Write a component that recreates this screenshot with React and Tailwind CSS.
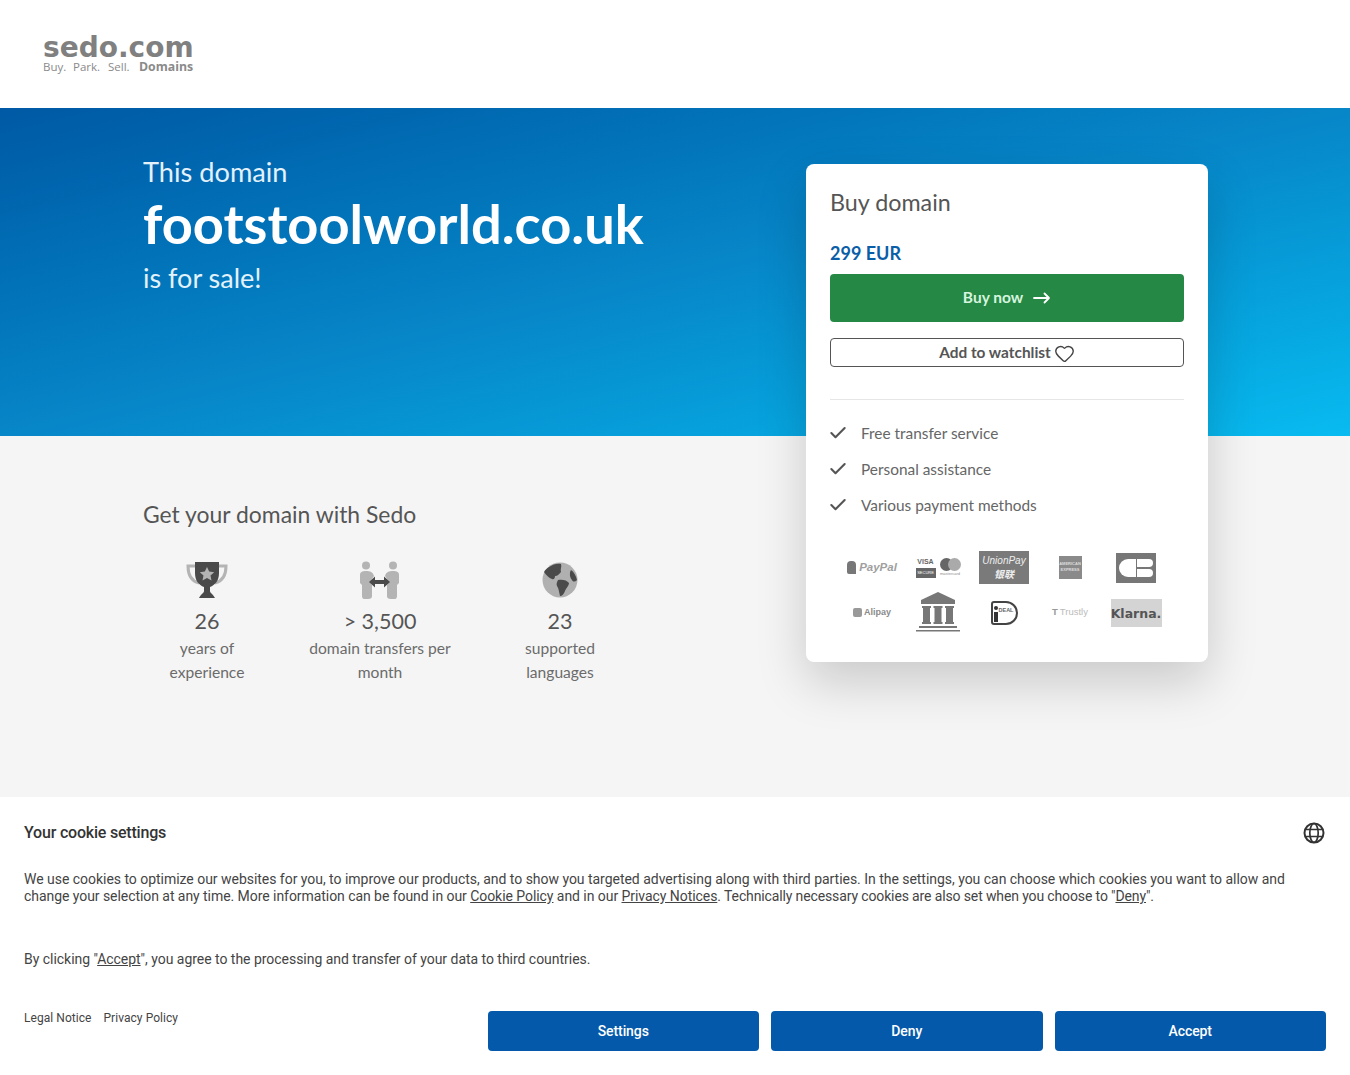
import React from 'react';
import { Heart, Check } from 'lucide-react';

const body = { fontFamily: 'Lato, "Noto Sans", sans-serif' };
const arial = { fontFamily: '"Liberation Sans", sans-serif' };
const dejavu = { fontFamily: '"DejaVu Sans", sans-serif' };

function Trophy() {
  return (
    <svg width="42" height="36" viewBox="0 0 42 36" className="block">
      <path d="M10 4H2c0 9 3 15 11 17M32 4h8c0 9-3 15-11 17" fill="none" stroke="#b4b4b4" strokeWidth="3" />
      <path d="M9 0h24v11c0 8-4 12-9 14v4c0 2 3 3 5 7H13c2-4 5-5 5-7v-4C13 23 9 19 9 11z" fill="#4a4a4a" />
      <path d="M21 5l2.200 4.600 5 .6-3.700 3.400 1 5-4.500-2.500-4.500 2.500 1-5-3.700-3.400 5-.6z" fill="#b4b4b4" />
    </svg>
  );
}

function People() {
  return (
    <svg width="42" height="38" viewBox="0 0 42 38" className="block">
      <circle cx="7" cy="4.500" r="4" fill="#b4b4b4" />
      <circle cx="34" cy="4.500" r="4" fill="#b4b4b4" />
      <path d="M1 14c0-3 2-4 6-4s7 1 8 5l-4 6 2 3v11c0 2-1 3-4 3H5c-1 0-2-1-2-3V24l-2-2z" fill="#b4b4b4" />
      <path d="M40 14c0-3-2-4-6-4s-7 1-8 5l4 6-2 3v11c0 2 1 3 4 3h4c1 0 2-1 2-3V24l2-2z" fill="#b4b4b4" />
      <path d="M10 21l6-5.500V19h9v-3.500l6 5.500-6 5.500V23h-9v3.500z" fill="#4a4a4a" />
    </svg>
  );
}

function Earth() {
  return (
    <svg width="36" height="36" viewBox="0 0 36 36" className="block">
      <circle cx="18" cy="18" r="17.500" fill="#b0b0b0" />
      <path d="M7 5c4-3 9-4 12-3 1 3-1 5 0 8-2 2-3 4-6 4 0 2-1 4-3 3-3-1-6-4-8-7 1-2 3-4 5-5z" fill="#4a4a4a" />
      <path d="M16 18c4-1 9 0 11 3 0 3-3 5-4 8-1 3-3 5-5 5-1-4-1-7-3-10-1-2 0-4 1-6z" fill="#4a4a4a" />
      <path d="M29 8c3 2 5 6 6 10-2 2-4 2-5 0-2-2-3-7-1-10z" fill="#4a4a4a" />
    </svg>
  );
}

function LangGlobe() {
  return (
    <svg width="22" height="22" viewBox="0 0 22 22" fill="none" stroke="#333" strokeWidth="2" className="block">
      <circle cx="11" cy="11" r="9.500" />
      <ellipse cx="11" cy="11" rx="4.200" ry="9.500" strokeWidth="1.700" />
      <path d="M2.500 7.500h17M2.500 14.500h17" strokeWidth="1.700" />
    </svg>
  );
}

function Stat({ icon, value, label, width }) {
  return (
    <div className={`flex flex-col items-center text-center ${width}`}>
      <div className="h-[38px] flex items-center justify-center">{icon}</div>
      <div className="mt-[7px] text-[21.5px] leading-[30px] text-[#555]">{value}</div>
      <div className="text-[15.6px] leading-[24px] text-[#6b6b6b]">{label}</div>
    </div>
  );
}

function PaymentLogos() {
  return (
    <div className="mt-[22px] ml-[9px] w-[330px] grid grid-cols-5 grid-rows-[45px_45px] items-center justify-items-center text-[#8d8d8d]">
      <div className="flex items-center gap-[3px] text-[11.5px] font-bold italic text-[#a0a0a0]" style={arial}>
        <span className="w-[9px] h-[13px] rounded-t-[4px] rounded-bl-[2px] bg-[#777]" />
        PayPal
      </div>
      <div className="flex items-center gap-[4px]">
        <div className="flex flex-col items-center">
          <span className="text-[7px] leading-[9px] font-bold text-[#666]" style={arial}>VISA</span>
          <span className="w-[20px] h-[10px] mt-[2px] bg-[#666] text-white text-[4px] leading-[10px] text-center" style={arial}>SECURE</span>
        </div>
        <div className="flex flex-col items-center">
          <div className="flex">
            <span className="w-[13px] h-[13px] rounded-full bg-[#666]" />
            <span className="w-[13px] h-[13px] rounded-full bg-[#aaa] -ml-[5px]" />
          </div>
          <span className="text-[4px] leading-[6px]" style={arial}>mastercard</span>
        </div>
      </div>
      <div className="w-[50px] h-[33px] bg-[#7a7a7a] text-[#eee] italic text-center text-[10px] leading-[13px] pt-[3px]" style={arial}>
        UnionPay<br /><span className="font-bold" style={{ fontFamily: '"Noto Sans CJK SC", sans-serif' }}>银联</span>
      </div>
      <div className="w-[23px] h-[23px] bg-[#8a8a8a] text-[#ddd] text-center text-[4px] leading-[6px] font-bold pt-[5px]" style={arial}>
        AMERICAN<br />EXPRESS
      </div>
      <div className="w-[40px] h-[30px] bg-[#777] flex items-center justify-center gap-[1px]">
        <span className="w-[17px] h-[18px] rounded-l-full bg-white" />
        <div className="flex flex-col gap-[2px]">
          <span className="w-[16px] h-[8px] rounded-r-full bg-white" />
          <span className="w-[16px] h-[8px] rounded-r-full bg-white" />
        </div>
      </div>

      <div className="flex items-center gap-[2px] text-[9px] font-bold text-[#8a8a8a]" style={arial}>
        <span className="w-[9px] h-[9px] rounded-[2px] bg-[#999]" />
        Alipay
      </div>
      <svg width="44" height="41" viewBox="0 0 44 41" className="block">
        <path d="M22 0L39 8v4H5V8z" fill="#777" />
        <path d="M6 14h9v2h-1v14h1v2H6v-2h1V16H6zM17.500 14h9v2h-1v14h1v2h-9v-2h1V16h-1zM29 14h9v2h-1v14h1v2h-9v-2h1V16h-1z" fill="#777" />
        <path d="M3 34h38v2H3zM0 38h44v1.500H0z" fill="#777" />
      </svg>
      <div className="relative w-[27px] h-[24px] rounded-l-[3px] rounded-r-[12px] border-2 border-[#444] bg-white">
        <span className="absolute left-[1px] top-[3px] w-[4px] h-[4px] rounded-full bg-[#333]" />
        <span className="absolute left-[1px] top-[9px] w-[4px] h-[10px] bg-[#333]" />
        <span className="absolute left-[6px] top-[3px] text-[5.5px] leading-[8px] font-bold text-[#666]" style={arial}>DEAL</span>
      </div>
      <div className="flex items-center gap-[2px] text-[9.500px] text-[#bbb]" style={arial}>
        <span className="font-bold text-[#999]">T</span>
        Trustly
      </div>
      <div className="w-[51px] h-[28px] bg-[#d4d4d4] text-[#555] text-[12.5px] leading-[30px] font-bold text-center whitespace-nowrap" style={dejavu}>Klarna.</div>
    </div>
  );
}

function BuyCard() {
  return (
    <div className="relative z-10 self-start mt-[56px] w-[402px] h-[498px] shrink-0 rounded-[8px] bg-white px-[24px] pt-[21px] shadow-[0_20px_50px_rgba(0,0,0,0.18)]">
      <h2 className="text-[23.300px] leading-[34px] text-[#555]">Buy domain</h2>
      <div className="mt-[20px] text-[18px] leading-[28px] font-bold text-[#0a5ea8]">299 EUR</div>
      <button className="mt-[7px] w-full h-[48px] rounded-[4px] bg-[#268845] flex items-center justify-center gap-[10px] text-[15.500px] font-bold text-[#d6f5df]">
        Buy now
        <svg width="18" height="12" viewBox="0 0 18 12" fill="none" stroke="#fff" strokeWidth="1.800" strokeLinecap="round" strokeLinejoin="round">
          <path d="M1 6h15M11.500 1.500L16 6l-4.500 4.500" />
        </svg>
      </button>
      <button className="mt-[16px] w-full h-[29px] rounded-[4px] border border-[#555] bg-white flex items-center justify-center gap-[3px] text-[15.400px] font-bold text-[#555]">
        Add to watchlist
        <Heart size={21} strokeWidth={1.6} className="translate-y-[1px] text-[#444]" />
      </button>
      <div className="mt-[32px] h-px bg-[#e6e6e6]" />
      <ul className="mt-[15px] flex flex-col text-[15.400px] leading-[36px] text-[#666]">
        {['Free transfer service', 'Personal assistance', 'Various payment methods'].map((t) => (
          <li key={t} className="flex items-center gap-[11px]">
            <Check size={20} strokeWidth={2.500} className="-ml-[2px] mr-[2px] text-[#555]" />
            {t}
          </li>
        ))}
      </ul>
      <PaymentLogos />
    </div>
  );
}

function CookieBanner() {
  return (
    <div className="fixed left-0 right-0 bottom-0 h-[278px] z-20 bg-white px-[24px] pt-[25px] text-[#444]" style={{ fontFamily: 'Roboto, sans-serif' }}>
      <div className="flex items-center justify-between pr-[1px]">
        <h3 className="text-[16px] leading-[20px] font-medium tracking-[-0.2px] text-[#333]">Your cookie settings</h3>
        <LangGlobe />
      </div>
      <p className="mt-[27px] text-[14px] leading-[17px]">
        <span className="tracking-[-0.03px]">We use cookies to optimize our websites for you, to improve our products, and to show you targeted advertising along with third parties. In the settings, you can choose which cookies you want to allow and </span>
        <span className="tracking-[-0.055px]">change your selection at any time. More information can be found in our <a className="underline">Cookie Policy</a> and in our <a className="underline">Privacy Notices</a>.</span>
        <span className="tracking-[-0.13px]"> Technically necessary cookies are also set when you choose to "<a className="underline">Deny</a>".</span>
      </p>
      <p className="mt-[46px] text-[14px] leading-[17px] tracking-[-0.03px]">
        By clicking "<a className="underline">Accept</a>", you agree to the processing and transfer of your data to third countries.
      </p>
      <div className="mt-[43px] flex items-start justify-between">
        <div className="flex gap-[12px] -mt-[1px] text-[12px] leading-[16px] tracking-[0.05px]">
          <a>Legal Notice</a>
          <a>Privacy Policy</a>
        </div>
        <div className="flex gap-[12px]">
          {['Settings', 'Deny', 'Accept'].map((t) => (
            <button key={t} className="w-[271.500px] h-[40px] rounded-[4px] bg-[#0459ab] text-white text-[14px] font-medium tracking-[-0.1px]">{t}</button>
          ))}
        </div>
      </div>
    </div>
  );
}

export default function App() {
  return (
    <div className="min-h-[1075px] flex flex-col bg-[#f5f5f5]" style={body}>
      <header className="h-[108px] bg-white pl-[43px] pt-[35px] shrink-0">
        <div className="w-[151px] text-[#808080]">
          <div className="text-[28px] leading-[26px] font-bold whitespace-nowrap" style={dejavu}>sedo.com</div>
          <div className="flex text-[11.500px] leading-[12px] text-[#8a8a8a]" style={{ fontFamily: '"Open Sans", sans-serif' }}>
            <span className="w-[30px]">Buy.</span><span className="w-[35px]">Park.</span><span className="w-[31px]">Sell.</span><span className="font-bold text-[12.300px] whitespace-nowrap">Domains</span>
          </div>
        </div>
      </header>

      <section className="h-[328px] shrink-0 bg-gradient-to-br from-[#0059a4] via-[#0786c8] to-[#08bbf0]">
        <div className="pl-[143px] pr-[142px] flex justify-between">
          <div className="pt-[46px] text-white">
            <div className="text-[27.200px] leading-[36px] text-[#e3f2fb]">This domain</div>
            <h1 className="mt-[3px] text-[54.200px] leading-[62px] font-bold">footstoolworld.co.uk</h1>
            <div className="mt-[5px] text-[27px] leading-[36px] text-[#e3f2fb]">is for sale!</div>
          </div>
          <BuyCard />
        </div>
      </section>

      <section className="flex-1 pl-[143px] pt-[60px]">
        <h2 className="text-[22.900px] leading-[36px] text-[#555]">Get your domain with Sedo</h2>
        <div className="mt-[29px] flex items-start">
          <Stat icon={<Trophy />} value="26" label={<>years of<br />experience</>} width="w-[128px]" />
          <Stat icon={<People />} value="> 3,500" label={<>domain transfers per<br />month</>} width="w-[190px] ml-[14px]" />
          <Stat icon={<Earth />} value="23" label={<>supported<br />languages</>} width="w-[100px] ml-[35px]" />
        </div>
      </section>

      <CookieBanner />
    </div>
  );
}
